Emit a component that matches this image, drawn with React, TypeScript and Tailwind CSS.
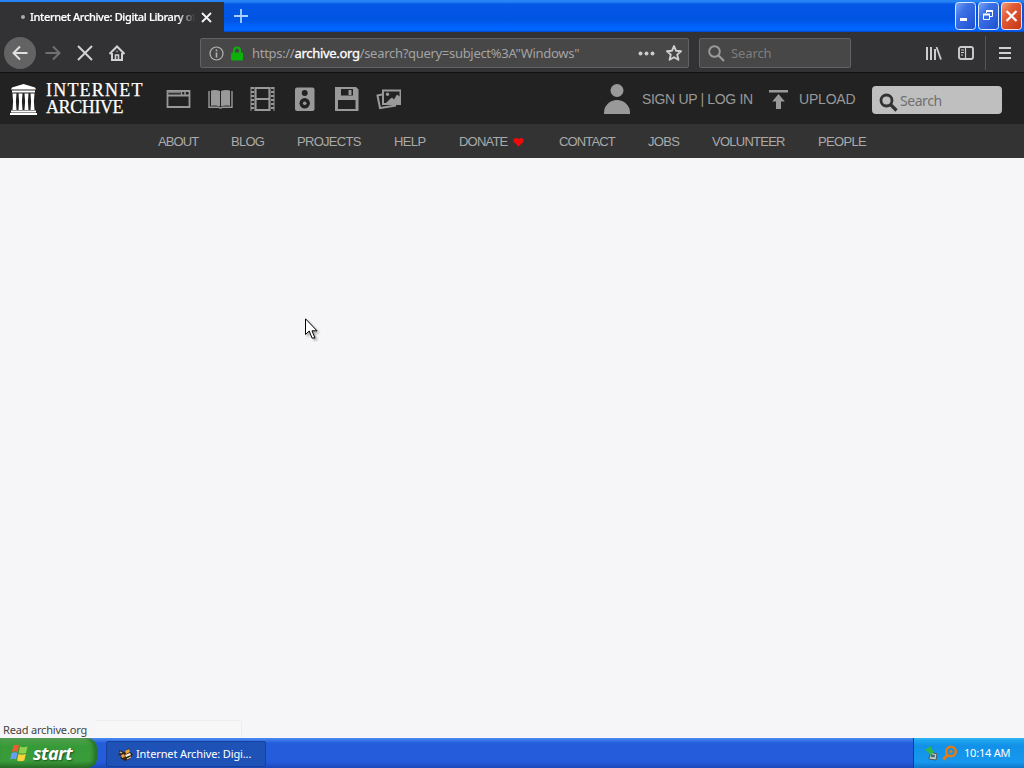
import type { ReactNode } from "react";

const siteLinks = [
  { label: "ABOUT", width: "w-[73px]", tracking: "tracking-[-0.9px]" },
  { label: "BLOG", width: "w-[66px]", tracking: "tracking-[-0.75px]" },
  { label: "PROJECTS", width: "w-[97px]", tracking: "tracking-[-0.7px]" },
  { label: "HELP", width: "w-[65px]", tracking: "tracking-[-0.6px]" },
  { label: "DONATE", width: "w-[100px]", tracking: "tracking-[-0.8px]", heart: true },
  { label: "CONTACT", width: "w-[89px]", tracking: "tracking-[-0.85px]" },
  { label: "JOBS", width: "w-[64px]", tracking: "tracking-[-0.7px]" },
  { label: "VOLUNTEER", width: "w-[106px]", tracking: "tracking-[-0.75px]" },
  { label: "PEOPLE", width: "w-[60px]", tracking: "tracking-[-0.65px]" },
];

type IconProps = {
  w: number;
  h: number;
  className?: string;
  children: ReactNode;
};

function Icon({ w, h, className = "", children }: IconProps) {
  return (
    <svg
      width={w}
      height={h}
      viewBox={`0 0 ${w} ${h}`}
      fill="none"
      className={`block shrink-0 ${className}`}
    >
      {children}
    </svg>
  );
}

function TitleBar() {
  return (
    <div className="flex h-8 bg-[linear-gradient(#2a86f5_0px,#2580f5_2px,#0558e6_4px,#0054e3_20px,#0062fc_26px,#0066ff_30px,#0048d0_32px)]">
      <div className="mt-[2px] flex h-[30px] w-[224px] items-center bg-[#323234]">
        <span className="ml-[21px] h-1 w-1 rounded-full bg-[#aaa]" />
        <span className="ml-[5px] w-[165px] overflow-hidden whitespace-nowrap text-[11px] font-medium tracking-[-0.36px] text-white [-webkit-text-stroke:0.2px_white] [mask-image:linear-gradient(to_right,black_148px,transparent_165px)]">
          Internet Archive: Digital Library of
        </span>
        <Icon w={11} h={11} className="ml-[6px]">
          <path d="M1 1l9 9M10 1l-9 9" stroke="#f4f4f4" strokeWidth="1.8" />
        </Icon>
      </div>
      <Icon w={14} h={14} className="ml-[10px] mt-[9px]">
        <path d="M7 0v14M0 7h14" stroke="#a9d0ff" strokeWidth="1.8" />
      </Icon>
      <div className="ml-auto mr-[2px] mt-[2px] flex gap-[2px]">
        <Icon w={21} h={28}>
          <rect x=".5" y=".5" width="20" height="27" rx="3" fill="url(#blueBtn)" stroke="#dce9ff" />
          <rect x="5" y="16" width="7" height="3" fill="#fff" />
          <defs>
            <linearGradient id="blueBtn" x1="0" y1="0" x2="1" y2="1">
              <stop stopColor="#7ea6f4" />
              <stop offset=".35" stopColor="#3b70e6" />
              <stop offset="1" stopColor="#1e4fd0" />
            </linearGradient>
            <linearGradient id="redBtn" x1="0" y1="0" x2="1" y2="1">
              <stop stopColor="#f0a080" />
              <stop offset=".35" stopColor="#e35d38" />
              <stop offset="1" stopColor="#c33512" />
            </linearGradient>
          </defs>
        </Icon>
        <Icon w={21} h={28}>
          <rect x=".5" y=".5" width="20" height="27" rx="3" fill="url(#blueBtn)" stroke="#dce9ff" />
          <path d="M8.500 11V8.500h6v6H12" stroke="#fff" />
          <path d="M8 9h7" stroke="#fff" strokeWidth="2" />
          <path d="M5.500 12.500h6v5h-6z" stroke="#fff" />
          <path d="M5 12.500h7" stroke="#fff" strokeWidth="2" />
        </Icon>
        <Icon w={21} h={28}>
          <rect x=".5" y=".5" width="20" height="27" rx="3" fill="url(#redBtn)" stroke="#ffe0d8" />
          <path d="M5.500 9l10 10M15.500 9l-10 10" stroke="#fff" strokeWidth="2.200" />
        </Icon>
      </div>
    </div>
  );
}

function BrowserToolbar() {
  return (
    <div className="flex h-[41px] items-center border-b border-[#111] bg-[#323234] pt-[2px]">
      <div className="ml-1 flex h-8 w-8 items-center justify-center rounded-full bg-[#636363]">
        <Icon w={16} h={16}>
          <path d="M15.500 8H1.500M8 1.500L1.500 8L8 14.500" stroke="#e0e0e0" strokeWidth="2" />
        </Icon>
      </div>
      <Icon w={16} h={16} className="ml-[9px]">
        <path d="M.5 8h14M8 1.500L14.500 8L8 14.500" stroke="#707072" strokeWidth="2" />
      </Icon>
      <Icon w={16} h={16} className="ml-4">
        <path d="M1 1l14 14M15 1L1 15" stroke="#d2d2d2" strokeWidth="2" />
      </Icon>
      <Icon w={16} h={16} className="ml-4">
        <path d="M.5 9L8 1.500L15.500 9M3 8v7h10V8" stroke="#d2d2d2" strokeWidth="2" />
        <path d="M6.500 15v-5h3v5M7.500 6.500h1" stroke="#d2d2d2" strokeWidth="1.600" />
      </Icon>

      <div className="ml-[75px] flex h-[30px] w-[489px] items-center rounded-[2px] border border-[#626264] bg-[#474747]">
        <Icon w={15} h={15} className="ml-[8px]">
          <circle cx="7.500" cy="7.500" r="6.500" stroke="#b5b5b5" strokeWidth="1.200" />
          <path d="M7.500 6.500V11.500M7.500 3.500v1.700" stroke="#b5b5b5" strokeWidth="1.600" />
        </Icon>
        <Icon w={12} h={15} className="ml-[7px]">
          <path d="M3 7V4.500a3 3 0 0 1 6 0V7" stroke="#0bb00b" strokeWidth="2" />
          <rect y="6.500" width="12" height="8" rx="1" fill="#0bb00b" />
        </Icon>
        <span className="ml-[9px] mt-px w-[384px] whitespace-nowrap text-[13px] tracking-[-0.3px] text-[#a3a3a3]">
          https://
          <span className="text-white [-webkit-text-stroke:0.3px_white]">archive.org</span>
          /search?query=subject%3A"Windows"
        </span>
        <Icon w={17} h={5} className="ml-[2px]">
          <circle cx="2.500" cy="2.500" r="2" fill="#ccc" />
          <circle cx="8.500" cy="2.500" r="2" fill="#ccc" />
          <circle cx="14.500" cy="2.500" r="2" fill="#ccc" />
        </Icon>
        <Icon w={16} h={16} className="ml-[11px]">
          <path
            d="M8 1l2 4.700 5 .5-3.800 3.400 1.200 5.200L8 12.200l-4.400 2.600 1.200-5.200L1 6.200l5-.5z"
            stroke="#d0d0d0"
            strokeWidth="1.900"
            strokeLinejoin="round"
          />
        </Icon>
      </div>

      <div className="ml-[10px] flex h-[30px] w-[152px] items-center rounded-[2px] border border-[#626264] bg-[#474747]">
        <Icon w={17} h={17} className="ml-[8px]">
          <circle cx="6.500" cy="6.500" r="5.300" stroke="#999" strokeWidth="2" />
          <path d="M10.300 10.300l5.700 5.700" stroke="#999" strokeWidth="2.200" />
        </Icon>
        <span className="ml-[6px] mt-px text-[13px] tracking-[-0.1px] text-[#7e7e7e]">Search</span>
      </div>

      <Icon w={16} h={14} className="ml-[75px]">
        <path d="M1 1v13M5 1v13M9 3v11" stroke="#ccc" strokeWidth="2" />
        <path d="M10.500 1l4.500 12.500" stroke="#ccc" strokeWidth="1.800" />
      </Icon>
      <Icon w={16} h={14} className="ml-4">
        <rect x="1" y="1" width="14" height="12" rx="2" stroke="#ccc" strokeWidth="1.900" />
        <path d="M7.500 1v12" stroke="#ccc" strokeWidth="1.200" />
        <path d="M3 4h3M3 6.500h3M3 9h2" stroke="#ccc" />
      </Icon>
      <span className="ml-[11px] h-[34px] w-px bg-[#555]" />
      <Icon w={12} h={12} className="ml-[13px]">
        <path d="M0 1h12M0 6h12M0 11h12" stroke="#d0d0d0" strokeWidth="2" />
      </Icon>
    </div>
  );
}

function MediaIcons() {
  return (
    <div className="ml-[22px] flex items-center gap-[17px]">
      <Icon w={25} h={26}>
        <path d="M1.500 5h22v16h-22z" stroke="#999" strokeWidth="1.800" />
        <path d="M1 9.500h23" stroke="#999" strokeWidth="2" />
        <path d="M1.500 6.500h13" stroke="#777" strokeWidth="1.500" />
        <path d="M15.500 4v5M19 4v5" stroke="#999" strokeWidth="1.500" />
      </Icon>
      <Icon w={25} h={26}>
        <path d="M3 4.500q5-1 9 .5v15.500q-4-1.500-9-.7zM22 4.500q-5-1-9 .5v15.500q4-1.500 9-.7z" fill="#999" />
        <path d="M1 5v16.300h9.500q2 1.500 4 0H24V5" stroke="#999" strokeWidth="1.400" />
      </Icon>
      <Icon w={25} h={26}>
        <path d="M5.500 2h14v22h-14zM5 13h15" stroke="#999" strokeWidth="2.200" />
        <path d="M2.500 1v24M22.500 1v24" stroke="#999" strokeWidth="3" strokeDasharray="2 2" />
        <path d="M1 1v24M24 1v24" stroke="#999" strokeWidth="1" />
      </Icon>
      <Icon w={25} h={26}>
        <rect x="3" y="1.500" width="19.500" height="23.500" rx="2" fill="#999" />
        <circle cx="12.700" cy="7" r="3" fill="#222" />
        <circle cx="12.700" cy="17.300" r="5.200" fill="#222" />
        <circle cx="12.700" cy="17.300" r="1.800" fill="#999" />
      </Icon>
      <Icon w={25} h={26}>
        <path d="M1 1h21l2.500 2.500V25H1z" fill="#999" />
        <path d="M7 3h12v6.500H7zM4 14h17.500v9H4z" fill="#222" />
        <path d="M14.500 4h3v5h-3z" fill="#999" />
      </Icon>
      <Icon w={25} h={26}>
        <path d="M6 8.500L1.500 9.500L4 22L20 19.500" stroke="#999" strokeWidth="2" />
        <path d="M6 3.500h19V19H6z" fill="#999" />
        <path d="M8 17V5.500h15.500v5l-2.500-2-3 5-2-2-2 1.500-4 4z" fill="#222" />
        <circle cx="11.500" cy="8.300" r="1.700" fill="#999" />
      </Icon>
    </div>
  );
}

function ArchiveHeader() {
  return (
    <header className="bg-[#222]">
      <div className="flex h-[51px] items-center">
        <Icon w={27} h={31} className="ml-[10px] mt-[2px]">
          <path
            d="M13.500 0L25 3.500l1 2H1l1-2zM2 6.500h23v2H2zM1 26.500h25v2H1zM0 29h27v2H0z"
            fill="#fff"
          />
          <path
            d="M2.500 9.500h4l-.6 8 .6 8.500h-4l.6-8.500zM8.500 9.500h4l-.6 8 .6 8.500h-4l.6-8.500zM14.500 9.500h4l-.6 8 .6 8.500h-4l.6-8.500zM20.500 9.500h4l-.6 8 .6 8.500h-4l.6-8.500z"
            fill="#fff"
          />
        </Icon>
        <div className="ml-[9px] flex w-[98px] flex-col whitespace-nowrap font-['Liberation_Serif',serif] text-[18px] leading-[17px] text-white [-webkit-text-stroke:0.25px_white]">
          <span className="tracking-[1.2px]">INTERNET</span>
          <span className="tracking-[-0.4px]">ARCHIVE</span>
        </div>
        <MediaIcons />
        <Icon w={26} h={31} className="ml-[203px] mt-[2px]">
          <circle cx="13" cy="6.500" r="6.500" fill="#999" />
          <path d="M0 30v-1.500a13 12.500 0 0 1 26 0V30z" fill="#999" />
        </Icon>
        <span className="ml-[12px] mt-[2px] w-[112px] whitespace-nowrap font-['Liberation_Sans',sans-serif] text-[14px] tracking-[-0.34px] text-[#999]">
          SIGN UP | LOG IN
        </span>
        <Icon w={20} h={19} className="ml-[15px] mt-[2px]">
          <path d="M0 0h19v2.500H0zM9.500 4l6.300 7.500h-3.800V19H7v-7.500H3.200z" fill="#999" />
        </Icon>
        <span className="ml-[10px] mt-[2px] w-[57px] whitespace-nowrap font-['Liberation_Sans',sans-serif] text-[14px] tracking-[-0.2px] text-[#999]">
          UPLOAD
        </span>
        <div className="ml-[16px] mt-[2px] flex h-7 w-[130px] items-center rounded-[4px] bg-[#bfbfbf]">
          <Icon w={19} h={19} className="ml-[7px] mt-[5px]">
            <circle cx="7.500" cy="7.500" r="5.500" stroke="#333" strokeWidth="2.800" />
            <path d="M11.500 11.500l6 6" stroke="#333" strokeWidth="3.200" />
          </Icon>
          <span className="ml-[2px] mt-[2px] text-[14px] tracking-[-0.45px] text-[#707070]">
            Search
          </span>
        </div>
      </div>
      <nav className="flex h-[34px] items-center bg-[#333] pl-[158px] pt-[2px] font-['Liberation_Sans',sans-serif] text-[13px] text-[#aaa]">
        {siteLinks.map((link) => (
          <a
            key={link.label}
            className={`flex shrink-0 items-center whitespace-nowrap ${link.tracking} ${link.width}`}
          >
            {link.label}
            {link.heart && (
              <Icon w={11} h={10} className="ml-[6px]">
                <path d="M5.500 9.500L.7 4.800C-.8 1.800 2.800-.5 5.500 2 8.200-.5 11.800 1.800 10.300 4.800z" fill="#f00b0b" />
              </Icon>
            )}
          </a>
        ))}
      </nav>
    </header>
  );
}

function Taskbar() {
  return (
    <div className="flex h-[30px] bg-[linear-gradient(#4c8cf0_0px,#3a7aea_2px,#245edb_5px,#245bdb_24px,#1c48b8_30px)]">
      <div className="flex h-[30px] w-[97px] items-center rounded-r-[10px] bg-[linear-gradient(#76bb74_0px,#48a047_3px,#379a38_8px,#3a9b3a_23px,#276e27_30px)] shadow-[inset_-3px_0_4px_#256e25]">
        <Icon w={19} h={18} className="ml-[10px]">
          <path d="M3.500 1.500Q6 0 9 1.500L7.700 8Q5 6.500 2 8z" fill="#ef5a31" />
          <path d="M10 2.500q3 1.500 7.500 0L16 9q-4 1.500-7.300 0z" fill="#8fd14a" />
          <path d="M1.700 9q3-1.500 5.800 0L6 15.500Q3 14 .2 15.500z" fill="#6a9df5" />
          <path d="M8.500 10q3.300 1.500 7.300 0l-1.500 6.500q-4 1.500-7.300 0z" fill="#fbd33c" />
        </Icon>
        <span className="ml-[4px] text-[18px] font-bold italic tracking-[-0.5px] text-white [text-shadow:1px_1px_2px_#1c4d1c]">
          start
        </span>
      </div>
      <div className="ml-[9px] mt-[3px] flex h-[26px] w-[160px] items-center rounded-[2px] border border-[#173f9c] bg-[#1e52b7]">
        <Icon w={15} h={14} className="ml-[11px]">
          <path d="M1 3l5 2 5-4 1 4 3 2-3 5-5 2-5-3 2-2-4-1 2-2z" fill="#32261c" />
          <path d="M7 4l4-2 1 3-4 2zM3 8l3-1 1 3-3 1z" fill="#e9a33a" />
          <path d="M7 8l5-2 1 2-5 2z" fill="#f6efd9" />
          <path d="M2 5l2 1M9 12l4-2" stroke="#e4c397" strokeWidth="1.200" />
        </Icon>
        <span className="ml-[3px] whitespace-nowrap text-[11px] tracking-[-0.12px] text-white">
          Internet Archive: Digi...
        </span>
      </div>
      <div className="ml-auto flex h-[30px] w-[111px] items-center border-l border-[#103d8e] bg-[linear-gradient(#30b5f5_0px,#1da3ee_3px,#1290e8_8px,#1698ee_24px,#0e76cb_30px)]">
        <Icon w={13} h={15} className="ml-[11px]">
          <path d="M5 6l7 2-1 6-7-1z" fill="#c9d2ca" stroke="#4c5851" />
          <path d="M6 8l4 1-.5 2.500-4-.5z" fill="#426a86" />
          <path d="M0 4l6-4v3l3 2-4 5-1-3z" fill="#35b642" />
        </Icon>
        <Icon w={16} h={16} className="ml-[4px]">
          <circle cx="9" cy="6.500" r="4.800" stroke="#e47b16" strokeWidth="2.500" />
          <circle cx="9" cy="6.500" r="1.500" fill="#e47b16" />
          <path d="M5.500 10L1.500 14.500" stroke="#e47b16" strokeWidth="3" />
        </Icon>
        <span className="ml-[6px] whitespace-nowrap text-[11px] tracking-[-0.2px] text-white">10:14 AM</span>
      </div>
    </div>
  );
}

export default function App() {
  return (
    <div className="relative flex h-[768px] w-[1024px] flex-col overflow-hidden bg-[#f6f6f8] font-['Noto_Sans',sans-serif]">
      <TitleBar />
      <BrowserToolbar />
      <ArchiveHeader />
      <main className="flex flex-1 items-end">
        <div className="flex h-[18px] items-center pl-[3px] pt-[2px] text-[11px] tracking-[-0.18px] text-[#444]">
          <span className="w-[93px] whitespace-nowrap">Read archive.org</span>
        </div>
        <div className="h-[18px] w-[146px] border-r border-t border-[#eeeeea] bg-[#f7f7f8]" />
      </main>
      <Taskbar />
      {/* mouse pointer */}
      <Icon w={14} h={22} className="absolute left-[305px] top-[318px] drop-shadow-[2px_2px_1px_rgba(0,0,0,0.3)]">
        <path
          d="M.5 .8v15.700l3.700-3.500 2.800 7h3l-3-7.200h5z"
          fill="#fff"
          stroke="#000"
        />
      </Icon>
    </div>
  );
}
